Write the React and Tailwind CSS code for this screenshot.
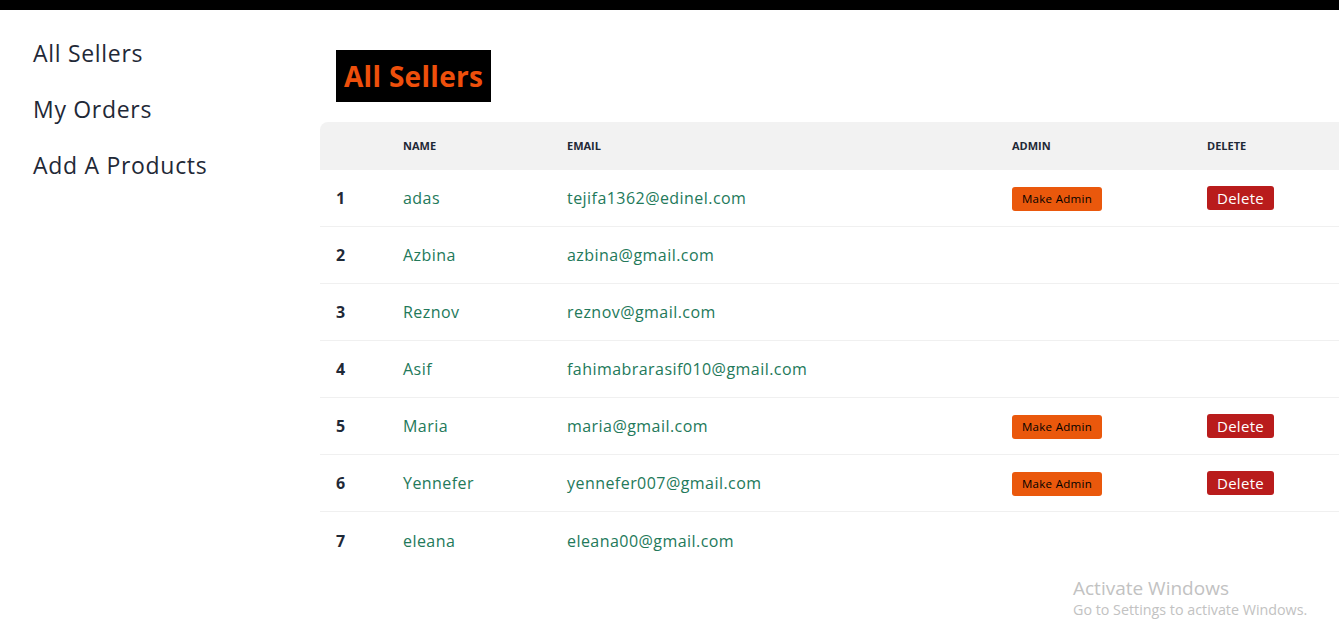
const sellers = [
  { id: 1, name: "adas", email: "tejifa1362@edinel.com", actions: true },
  { id: 2, name: "Azbina", email: "azbina@gmail.com", actions: false },
  { id: 3, name: "Reznov", email: "reznov@gmail.com", actions: false },
  { id: 4, name: "Asif", email: "fahimabrarasif010@gmail.com", actions: false },
  { id: 5, name: "Maria", email: "maria@gmail.com", actions: true },
  { id: 6, name: "Yennefer", email: "yennefer007@gmail.com", actions: true },
  { id: 7, name: "eleana", email: "eleana00@gmail.com", actions: false },
];

const links = ["All Sellers", "My Orders", "Add A Products"];

export default function App() {
  return (
    <div
      className="relative min-h-[640px] overflow-hidden bg-white text-[#1f2937]"
      style={{ fontFamily: '"Open Sans", "Liberation Sans", sans-serif' }}
    >
      {/* Top bar */}
      <div className="h-[10px] bg-black" />

      <div className="flex">
        {/* Sidebar */}
        <aside className="w-[320px] shrink-0 pl-[33px] pt-[15px]">
          {links.map((link) => (
            <div key={link} className="flex h-14 items-center text-[23px] tracking-[0.7px] text-[#1f2937]">
              {link}
            </div>
          ))}
        </aside>

        {/* Main */}
        <main className="min-w-0 flex-1 pt-10">
          <div className="ml-4 inline-flex h-[52px] items-center bg-black px-2">
            <h1 className="text-[28px] font-bold tracking-[0.3px] text-[#ee4f0b]">All Sellers</h1>
          </div>

          <table className="mt-5 w-[1060px] table-fixed border-separate border-spacing-0 text-left">
            <colgroup>
              <col className="w-[67px]" />
              <col className="w-[164px]" />
              <col className="w-[445px]" />
              <col className="w-[195px]" />
              <col />
            </colgroup>
            <thead>
              <tr className="h-12 bg-[#f2f2f2] text-[11px] font-bold uppercase text-[#1f2937]">
                <th className="rounded-tl-lg px-4" />
                <th className="px-4">Name</th>
                <th className="px-4">Email</th>
                <th className="px-4">Admin</th>
                <th className="px-4">Delete</th>
              </tr>
            </thead>
            <tbody>
              {sellers.map((s, i) => {
                const cell =
                  i === sellers.length - 1 ? "px-4" : "border-b border-[#f0f0f0] px-4";
                return (
                  <tr key={s.id} className="h-[57px] text-[16px] tracking-[0.45px]">
                    <td className={`${cell} font-bold text-[#1f2937]`}>{s.id}</td>
                    <td className={`${cell} text-[#23795a]`}>{s.name}</td>
                    <td className={`${cell} text-[#23795a]`}>{s.email}</td>
                    <td className={cell}>
                      {s.actions && (
                        <button className="h-6 w-[90px] rounded-[3px] bg-[#ea580c] text-[11.5px] tracking-[0.3px] text-black">
                          Make Admin
                        </button>
                      )}
                    </td>
                    <td className={cell}>
                      {s.actions && (
                        <button className="h-6 w-[67px] rounded-[3px] bg-[#b91c1c] text-[15px] tracking-[0.3px] text-white">
                          Delete
                        </button>
                      )}
                    </td>
                  </tr>
                );
              })}
            </tbody>
          </table>
        </main>
      </div>

      {/* Windows watermark */}
      <div className="absolute left-[1073px] top-[576px] text-[#c2c2c2]">
        <div className="text-[19px] leading-6">Activate Windows</div>
        <div className="text-[14.3px] leading-5">Go to Settings to activate Windows.</div>
      </div>
    </div>
  );
}
